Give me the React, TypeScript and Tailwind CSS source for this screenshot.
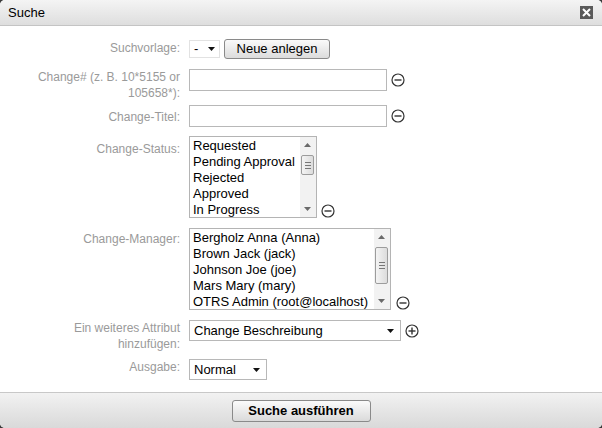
import React from 'react';

const font = "font-['Liberation_Sans',Arial,sans-serif]";

const Arrow = ({ className = '' }: { className?: string }) => (
  <svg width="7" height="4" viewBox="0 0 7 4" className={className}>
    <path d="M0 0h7L3.5 4z" fill="#111" />
  </svg>
);

const CircleIcon = ({ plus = false }: { plus?: boolean }) => (
  <svg width="14" height="14" viewBox="0 0 14 14" className="shrink-0">
    <circle cx="7" cy="7" r="6" fill="none" stroke="#333" strokeWidth="1.2" />
    <path d="M3.5 7h7" stroke="#333" strokeWidth="1.4" />
    {plus && <path d="M7 3.5v7" stroke="#333" strokeWidth="1.4" />}
  </svg>
);

const Row = ({
  lines,
  labelPt,
  className = '',
  children,
}: {
  lines: string[];
  labelPt: string;
  className?: string;
  children: React.ReactNode;
}) => (
  <div className={`flex items-start ${className}`}>
    <div
      className={`ml-[56px] flex w-[124px] flex-col items-end whitespace-nowrap text-[12px] leading-[16px] text-[#9a9a9a] ${labelPt}`}
    >
      {lines.map((line) => (
        <span key={line}>{line}</span>
      ))}
    </div>
    <div className="ml-[9px]">{children}</div>
  </div>
);

const ListBox = ({
  items,
  width,
  thumbTop,
  thumbHeight,
}: {
  items: string[];
  width: string;
  thumbTop: string;
  thumbHeight: string;
}) => (
  <div className={`relative flex h-[82px] ${width} border border-[#b4b4b4] bg-white`}>
    <div className="flex-1 overflow-hidden pl-[3px] pt-[1px] text-[13px] leading-[16px] text-black">
      {items.map((item) => (
        <div key={item} className="whitespace-nowrap">
          {item}
        </div>
      ))}
    </div>
    <div className="relative w-[16px] bg-[#f2f2f2]">
      <svg width="7" height="4" viewBox="0 0 7 4" className="absolute left-[4px] top-[6px]">
        <path d="M0 4h7L3.5 0z" fill="#6a6a6a" />
      </svg>
      <div
        className={`absolute left-[1px] w-[13px] ${thumbTop} ${thumbHeight} flex flex-col items-center justify-center gap-[2px] rounded-[2px] border border-[#9c9c9c] bg-gradient-to-r from-[#f4f4f4] to-[#dcdcdc]`}
      >
        <div className="h-px w-[6px] bg-[#777]" />
        <div className="h-px w-[6px] bg-[#777]" />
        <div className="h-px w-[6px] bg-[#777]" />
      </div>
      <svg width="7" height="4" viewBox="0 0 7 4" className="absolute bottom-[6px] left-[4px]">
        <path d="M0 0h7L3.5 4z" fill="#6a6a6a" />
      </svg>
    </div>
  </div>
);

const App = () => {
  return (
    <div className={`h-[428px] w-[602px] bg-[#3a3a3a] ${font}`}>
      <div className="flex h-[428px] w-[602px] flex-col overflow-hidden rounded-[5px] bg-white">
        {/* title bar */}
        <div className="flex h-[26px] items-center justify-between border-b border-[#c4c4c4] bg-gradient-to-b from-[#f4f4f4] to-[#dedede] pl-[8px] pr-[9px]">
          <span className="text-[13px] text-black">Suche</span>
          <div className="flex h-[13px] w-[13px] items-center justify-center bg-[#5a5a5a]">
            <svg width="9" height="9" viewBox="0 0 9 9">
              <path d="M1 1l7 7M8 1L1 8" stroke="#fff" strokeWidth="2" />
            </svg>
          </div>
        </div>

        {/* form */}
        <div className="flex-1 pt-[13px]">
          <Row lines={['Suchvorlage:']} labelPt="pt-[1px]">
            <div className="flex items-start gap-[4px]">
              <div className="mt-px flex h-[18px] w-[31px] items-center justify-between border border-[#e2e2e2] px-[4px] text-[13px]">
                <span>-</span>
                <Arrow />
              </div>
              <button className="h-[20px] w-[106px] rounded-[3px] border border-[#8a8a8a] bg-gradient-to-b from-[#fafafa] to-[#dcdcdc] text-[13px] leading-[18px] text-black">
                Neue anlegen
              </button>
            </div>
          </Row>

          <Row lines={['Change# (z. B. 10*5155 or', '105658*):']} labelPt="pt-[0px]" className="mt-[10px]">
            <div className="flex items-center gap-[4px]">
              <div className="h-[22px] w-[198px] border border-[#b8b8b8] bg-white" />
              <CircleIcon />
            </div>
          </Row>

          <Row lines={['Change-Titel:']} labelPt="pt-[4px]" className="mt-[4px]">
            <div className="flex items-center gap-[4px]">
              <div className="h-[22px] w-[198px] border border-[#b8b8b8] bg-white" />
              <CircleIcon />
            </div>
          </Row>

          <Row lines={['Change-Status:']} labelPt="pt-[5px]" className="mt-[9px]">
            <div className="flex items-end gap-[4px]">
              <ListBox
                items={['Requested', 'Pending Approval', 'Rejected', 'Approved', 'In Progress']}
                width="w-[128px]"
                thumbTop="top-[18px]"
                thumbHeight="h-[20px]"
              />
              <CircleIcon />
            </div>
          </Row>

          <Row lines={['Change-Manager:']} labelPt="pt-[3px]" className="mt-[10px]">
            <div className="flex items-end gap-[5px]">
              <ListBox
                items={[
                  'Bergholz Anna (Anna)',
                  'Brown Jack (jack)',
                  'Johnson Joe (joe)',
                  'Mars Mary (mary)',
                  'OTRS Admin (root@localhost)',
                ]}
                width="w-[202px]"
                thumbTop="top-[18px]"
                thumbHeight="h-[37px]"
              />
              <CircleIcon />
            </div>
          </Row>

          <Row lines={['Ein weiteres Attribut', 'hinzufügen:']} labelPt="pt-[0px]" className="mt-[10px]">
            <div className="flex items-center gap-[4px]">
              <div className="flex h-[21px] w-[212px] items-center justify-between border border-[#b8b8b8] pl-[4px] pr-[6px] text-[13px] text-black">
                <span>Change Beschreibung</span>
                <Arrow />
              </div>
              <CircleIcon plus />
            </div>
          </Row>

          <Row lines={['Ausgabe:']} labelPt="pt-[0px]" className="mt-[7px]">
            <div className="flex h-[21px] w-[78px] items-center justify-between border border-[#b8b8b8] pl-[4px] pr-[6px] text-[13px] text-black">
              <span>Normal</span>
              <Arrow />
            </div>
          </Row>
        </div>

        {/* footer */}
        <div className="flex h-[36px] items-center justify-center border-t border-[#c8c8c8] bg-gradient-to-b from-[#f2f2f2] to-[#d9d9d9]">
          <button className="h-[22px] w-[139px] rounded-[3px] border border-[#8a8a8a] bg-gradient-to-b from-[#fbfbfb] to-[#dadada] text-[13px] font-bold text-black">
            Suche ausführen
          </button>
        </div>
      </div>
    </div>
  );
};

export default App;
